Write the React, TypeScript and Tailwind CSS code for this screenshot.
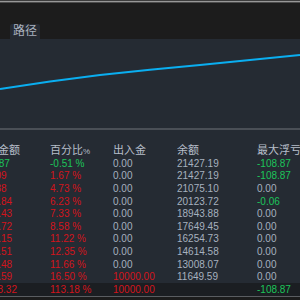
const RED = 'text-[#d3141c]';
const GREEN = 'text-[#1cc45a]';
const GRAY = 'text-[#a6b1bf]';

type Cell = { v: string; c: string };
type Row = Cell[];

const r = (v: string): Cell => ({ v, c: RED });
const g = (v: string): Cell => ({ v, c: GREEN });
const n = (v: string): Cell => ({ v, c: GRAY });

const rows: Row[] = [
  [g('-108.87'), g('-0.51 %'), n('0.00'), n('21427.19'), g('-108.87')],
  [r('357.09'), r('1.67 %'), n('0.00'), n('21427.19'), g('-108.87')],
  [r('997.88'), r('4.73 %'), n('0.00'), n('21075.10'), n('0.00')],
  [r('1312.84'), r('6.23 %'), n('0.00'), n('20123.72'), g('-0.06')],
  [r('1544.43'), r('7.33 %'), n('0.00'), n('18943.88'), n('0.00')],
  [r('1808.72'), r('8.58 %'), n('0.00'), n('17649.45'), n('0.00')],
  [r('2364.15'), r('11.22 %'), n('0.00'), n('16254.73'), n('0.00')],
  [r('2602.51'), r('12.35 %'), n('0.00'), n('14614.58'), n('0.00')],
  [r('2457.48'), r('11.66 %'), n('0.00'), n('13008.07'), n('0.00')],
  [r('3477.59'), r('16.50 %'), r('10000.00'), n('11649.59'), n('0.00')],
];

const total: Row = [r('11318.32'), r('113.18 %'), r('10000.00'), n(''), g('-108.87')];

const widths = ['w-[74px]', 'w-[63px]', 'w-[64px]', 'w-[80px]', 'flex-1'];

function TableRow({ row, className }: { row: Row; className: string }) {
  return (
    <div className={`flex ml-[-24px] items-center whitespace-nowrap text-[10px] ${className}`}>
      {row.map((cell, i) => (
        <div key={i} className={`${widths[i]} shrink-0 ${cell.c}`}>
          {cell.v}
        </div>
      ))}
    </div>
  );
}

export default function App() {
  return (
    <div
      className="w-[300px] h-[300px] overflow-hidden flex flex-col bg-[#1c1c1c]"
      style={{ fontFamily: '"Liberation Sans", "Noto Sans CJK SC", sans-serif' }}
    >
      <div className="h-px bg-[#3c3c3c]" />
      <div className="h-px bg-[#979797]" />
      <div className="h-px bg-[#4c4c4c]" />

      <div className="h-[36px] flex items-end pl-[10px]">
        <div className="h-[15px] w-[30px] rounded-t-[2px] bg-[#252a32] text-[#a9b1bd] text-[12px] leading-[15px] text-center">
          路径
        </div>
      </div>

      <div className="h-[89px] bg-[#252b33]">
        <svg width="300" height="89" viewBox="0 39 300 89">
          <polyline
            points="0,89 50,81.5 100,75 150,69.8 200,65 240,61 300,55"
            fill="none"
            stroke="#0aaef0"
            strokeWidth="2"
          />
        </svg>
      </div>

      <div className="h-[2px] bg-[#4a4f56]" />

      <div className="bg-[#252b33] pt-[13px]">
        <div className="flex ml-[-24px] items-center h-[14px] whitespace-nowrap text-[11px] text-[#b6bec9]">
          <div className="w-[74px] shrink-0">盈亏金额</div>
          <div className="w-[63px] shrink-0">
            百分比<span className="text-[8px]">%</span>
          </div>
          <div className="w-[64px] shrink-0">出入金</div>
          <div className="w-[80px] shrink-0">余额</div>
          <div className="flex-1">最大浮亏</div>
        </div>
        {rows.map((row, i) => (
          <TableRow key={i} row={row} className="h-[12.6px]" />
        ))}
      </div>

      <TableRow row={total} className="h-[13px] bg-[#1b1e22]" />
      <div className="h-px bg-[#5a5d61]" />
    </div>
  );
}
